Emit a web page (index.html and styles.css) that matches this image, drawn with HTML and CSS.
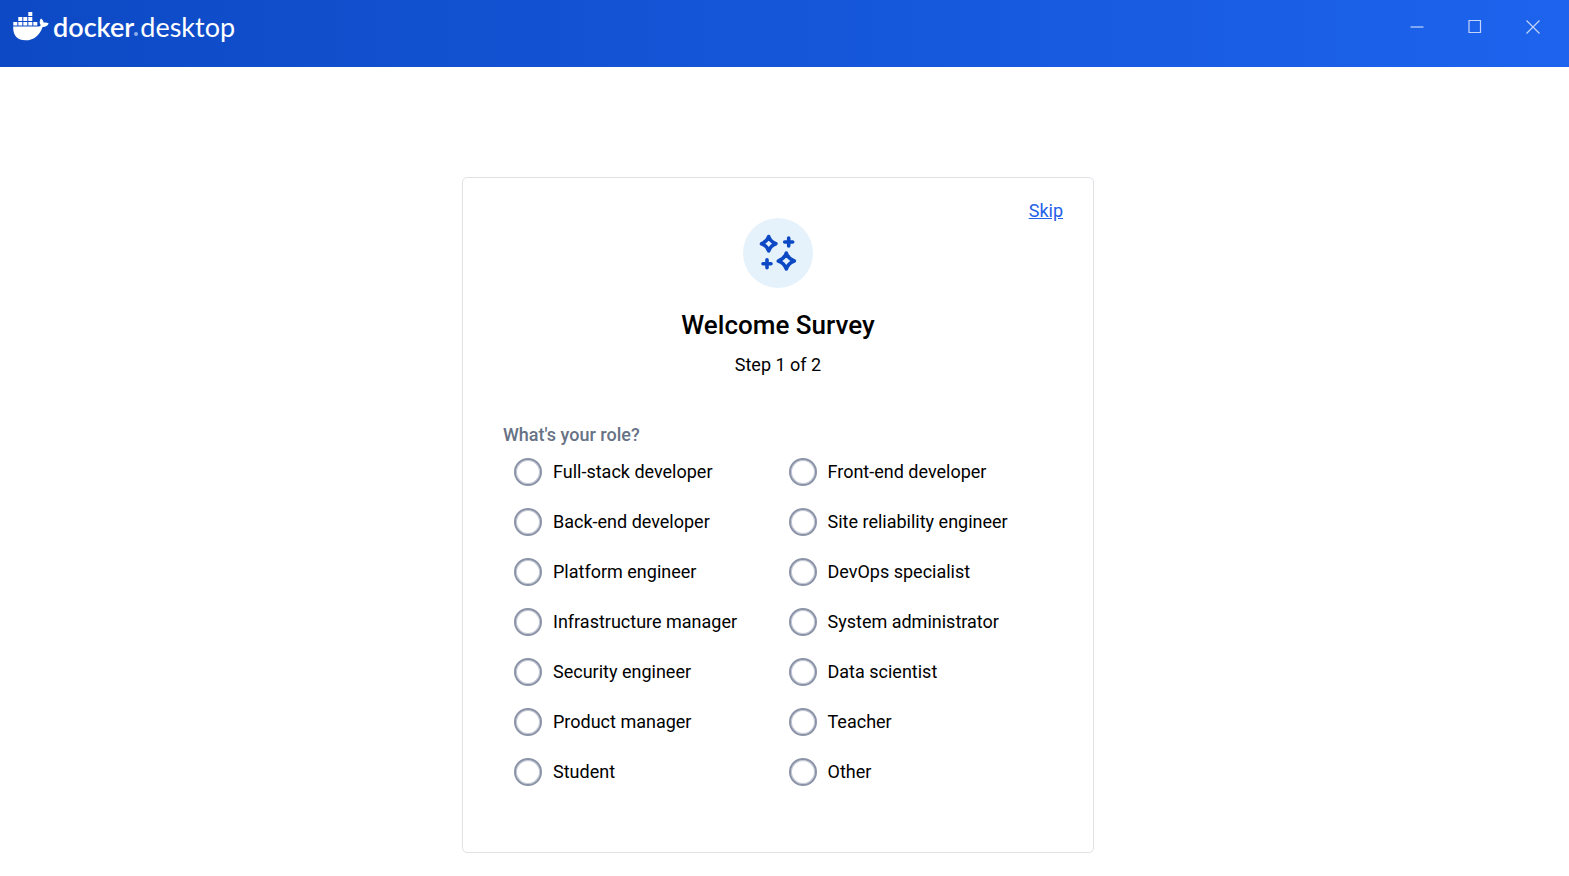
FILE: index.html
```html
<!DOCTYPE html>
<html lang="en">
<head>
<meta charset="utf-8">
<meta name="viewport" content="width=device-width, initial-scale=1">
<title>Docker Desktop</title>
<link rel="stylesheet" href="styles.css">
</head>
<body>
<header class="titlebar">
  <div class="brand">
    <svg class="brand-whale" width="36" height="29" viewBox="0 0 36 29" fill="#fff" aria-hidden="true">
      <path d="M15.3 0h4v4h-4zM5.3 5h4v4h-4zM10.3 5h4v4h-4zM15.3 5h4v4h-4zM.3 10h4v3.600h-4zM5.300 10h4v3.600h-4zM10.300 10h4v3.600h-4zM15.300 10h4v3.600h-4zM20.300 10h4v3.600h-4z"/>
      <path d="M.2 14.500H24.500C26.300 14.500 27.200 13.900 27.800 13.200C26.200 11.200 26.300 8.700 27.900 6.600C29.500 7.700 30.500 9 30.700 10.800C32.500 10.400 34.300 10.700 35.700 11.500C34.800 13.800 32.500 15 29.600 14.900C27 22.500 21.500 28.300 12.500 28.300C4.200 28.300-.3 23.200.2 14.500Z"/>
    </svg>
    <span class="brand-name"><b class="brand-docker">docker</b><i class="brand-dot"></i><span>desktop</span></span>
  </div>
  <div class="window-controls">
    <button class="window-button" type="button" aria-label="Minimize">
      <svg width="14" height="14" viewBox="0 0 14 14"><path d="M.5 7h13"/></svg>
    </button>
    <button class="window-button" type="button" aria-label="Maximize">
      <svg width="14" height="14" viewBox="0 0 14 14"><path d="M1 .5h11.500v12H1z"/></svg>
    </button>
    <button class="window-button" type="button" aria-label="Close">
      <svg width="14" height="14" viewBox="0 0 14 14"><path d="M.5.5l13 13M13.500.5l-13 13"/></svg>
    </button>
  </div>
</header>
<main class="page">
  <form class="card">
    <a class="skip" href="#skip">Skip</a>
    <div class="intro">
      <svg class="badge" width="70" height="70" viewBox="0 0 70 70" aria-hidden="true">
        <circle cx="35" cy="35" r="35" fill="#e5f2fc"/>
        <g fill="none" stroke="#0d49c4" stroke-width="3.600" stroke-linejoin="round" stroke-linecap="round">
          <path d="M25.700 18.500Q27.500 23.900 32.900 25.700Q27.500 27.500 25.700 32.900Q23.900 27.500 18.500 25.700Q23.900 23.900 25.700 18.500Z"/>
          <path d="M43.300 35Q45.300 41 51.300 43Q45.300 45 43.300 51Q41.300 45 35.300 43Q41.300 41 43.300 35Z"/>
          <path d="M45.700 20v8M41.700 24h8M24 41.700v8M20 45.700h8"/>
        </g>
      </svg>
      <h1 class="title">Welcome Survey</h1>
      <p class="step">Step 1 of 2</p>
    </div>
    <fieldset class="roles">
      <legend class="question">What's your role?</legend>
      <div class="options">
        <label class="option"><input class="radio" type="radio" name="role">Full-stack developer</label>
        <label class="option"><input class="radio" type="radio" name="role">Front-end developer</label>
        <label class="option"><input class="radio" type="radio" name="role">Back-end developer</label>
        <label class="option"><input class="radio" type="radio" name="role">Site reliability engineer</label>
        <label class="option"><input class="radio" type="radio" name="role">Platform engineer</label>
        <label class="option"><input class="radio" type="radio" name="role">DevOps specialist</label>
        <label class="option"><input class="radio" type="radio" name="role">Infrastructure manager</label>
        <label class="option"><input class="radio" type="radio" name="role">System administrator</label>
        <label class="option"><input class="radio" type="radio" name="role">Security engineer</label>
        <label class="option"><input class="radio" type="radio" name="role">Data scientist</label>
        <label class="option"><input class="radio" type="radio" name="role">Product manager</label>
        <label class="option"><input class="radio" type="radio" name="role">Teacher</label>
        <label class="option"><input class="radio" type="radio" name="role">Student</label>
        <label class="option"><input class="radio" type="radio" name="role">Other</label>
      </div>
    </fieldset>
  </form>
</main>
</body>
</html>
```
FILE: styles.css
```css
* { box-sizing: border-box; }

body {
  margin: 0;
  background: #fff;
  color: #000;
  font: 18px/24px Roboto, sans-serif;
}

.titlebar {
  display: flex;
  justify-content: space-between;
  align-items: flex-start;
  height: 67px;
  padding-left: 13px;
  background: linear-gradient(90deg, #0d49c4, #1d63ed);
  color: #fff;
}

.brand {
  display: flex;
  align-items: flex-start;
  gap: 4px;
  padding-top: 12px;
}

.brand-name {
  display: flex;
  font: 400 27px/30px Lato, sans-serif;
}

.brand-docker { font-weight: 600; }

.brand-dot {
  align-self: flex-end;
  width: 4px;
  height: 4px;
  margin: 0 2px 6px 0;
  border-radius: 50%;
  background: #8fadea;
}

.window-controls { display: flex; padding-right: 7px; }

.window-button {
  display: grid;
  place-items: center;
  width: 58px;
  height: 54px;
  padding: 0;
  border: 0;
  background: none;
}

.window-button svg {
  fill: none;
  stroke: #c3d5fa;
  stroke-width: 1.2;
}

.page {
  display: flex;
  justify-content: center;
  padding: 110px 13px 23px 0;
}

.card {
  display: flex;
  flex-direction: column;
  width: 100%;
  max-width: 632px;
  padding: 21px 30px 55px 40px;
  border: 1px solid #e1e2e6;
  border-radius: 5px;
}

.skip {
  align-self: flex-end;
  color: #2560e8;
}

.intro {
  display: flex;
  flex-direction: column;
  align-items: center;
  margin: -5px 10px 0 0;
}

.title {
  margin: 20px 0 0;
  font-size: 26px;
  font-weight: 500;
  line-height: 34px;
}

.step { margin: 11px 0 0; }

.roles {
  min-width: 0;
  margin: 46px 0 0;
  padding: 0;
  border: 0;
}

.question {
  padding: 0;
  color: #677285;
  font-weight: 500;
}

.options {
  display: grid;
  grid-template-columns: repeat(2, 1fr);
  padding: 0 0 0 11px;
}

.option {
  display: flex;
  align-items: center;
  gap: 11px;
  height: 50px;
}

.radio {
  appearance: none;
  flex: none;
  width: 28px;
  height: 28px;
  margin: 0;
  border: 2px solid #8b93a8;
  border-radius: 50%;
  box-shadow: inset 0 0 0 1px #c5c9d4;
}

.radio:checked {
  border-color: #1d63ed;
  background: radial-gradient(#1d63ed 50%, transparent 54%);
}
```
